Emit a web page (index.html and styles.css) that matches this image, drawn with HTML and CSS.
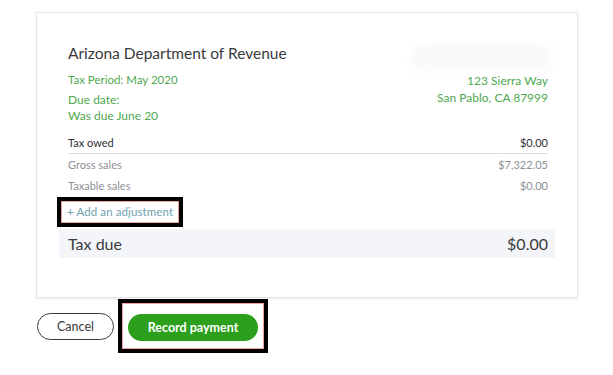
FILE: index.html
```html
<!DOCTYPE html>
<html>
<head>
<meta charset="utf-8">
<link rel="stylesheet" href="styles.css">
</head>
<body>
<div class="page">
  <div class="card">
    <div class="smudge"></div>
    <h1 class="agency">Arizona Department of Revenue</h1>
    <div class="meta">
      <div class="meta-left">
        <div class="period">Tax Period: May 2020</div>
        <div class="due">Due date:<br>Was due June 20</div>
      </div>
      <div class="meta-right">123 Sierra Way<br>San Pablo, CA 87999</div>
    </div>
    <div class="row row-head"><span>Tax owed</span><span>$0.00</span></div>
    <div class="row row-sub"><span>Gross sales</span><span>$7,322.05</span></div>
    <div class="row row-sub"><span>Taxable sales</span><span>$0.00</span></div>
    <div class="adj-wrap"><span class="mark mark-adj"><a class="adj" href="#">+ Add an adjustment</a></span></div>
    <div class="total"><span>Tax due</span><span>$0.00</span></div>
  </div>
  <div class="actions">
    <button class="btn btn-cancel">Cancel</button>
    <span class="mark mark-btn"><button class="btn btn-primary">Record payment</button></span>
  </div>
</div>
</body>
</html>
```
FILE: styles.css
```css
* { box-sizing: border-box; }
html, body { margin: 0; padding: 0; background: #fff; }
body { font-family: Lato, "Noto Sans", sans-serif; color: #393a3d; }
.page { padding: 12px 0 0 36px; width: 613px; height: 375px; }
.card {
  position: relative;
  width: 542px;
  height: 286px;
  border: 1px solid #e4e4e4;
  box-shadow: 0 1px 3px rgba(0,0,0,0.08);
  padding: 30px 22px 0 22px;
}
.smudge {
  position: absolute;
  left: 375px; top: 32px; width: 140px; height: 26px;
  background: #f9f9f9;
  filter: blur(5px);
  border-radius: 10px;
}
.agency {
  margin: 0 0 0 9px;
  font-size: 15.5px;
  font-weight: 400;
  line-height: 20px;
  color: #393a3d;
  position: relative;
}
.meta {
  display: flex;
  justify-content: space-between;
  padding: 0 7px 0 9px;
  margin-top: 9px;
  color: #4fa84f;
  font-size: 11.5px;
}
.period { line-height: 16px; }
.due { margin-top: 4px; line-height: 16px; font-size: 12px; }
.meta-right { text-align: right; line-height: 17px; font-size: 12px; }
.row {
  display: flex;
  justify-content: space-between;
  margin: 0 7px 0 9px;
  font-size: 11px;
}
.row-head {
  margin-top: 9px;
  height: 21px;
  line-height: 20px;
  border-bottom: 1px solid #dcdcdc;
  color: #2f3033;
}
.row-sub { height: 21px; line-height: 22px; color: #8d9096; }
.adj-wrap { margin-top: 0; height: 33px; padding-top: 1px; }
.mark {
  display: inline-block;
  border: 4px solid #000;
  box-shadow: inset 0 0 0 1px #f0a0a0;
}
.mark-adj { margin-left: -2px; padding: 3px 6px 3px 6px; }
.adj { color: #6ea1ad; text-decoration: none; font-size: 11.5px; line-height: 16px; display: block; letter-spacing: 0.1px; }
.total {
  display: flex;
  justify-content: space-between;
  background: #f4f5f8;
  height: 29px;
  padding: 0 7px 0 9px;
  align-items: center;
  font-size: 16px;
  color: #393a3d;
}
.actions { display: flex; align-items: center; margin-top: 1px; }
.btn {
  font-family: Lato, "Noto Sans", sans-serif;
  border-radius: 14px;
  height: 27px;
  font-size: 12.5px;
  cursor: pointer;
}
.btn-cancel {
  margin-left: 1px;
  width: 77px;
  background: #fff;
  border: 1px solid #393a3d;
  color: #393a3d;
}
.mark-btn { margin-left: 4px; padding: 11px 6px 8px 6px; }
.btn-primary {
  display: block;
  width: 130px;
  background: #2ca01c;
  border: none;
  color: #fff;
  font-weight: 700;
}
```
